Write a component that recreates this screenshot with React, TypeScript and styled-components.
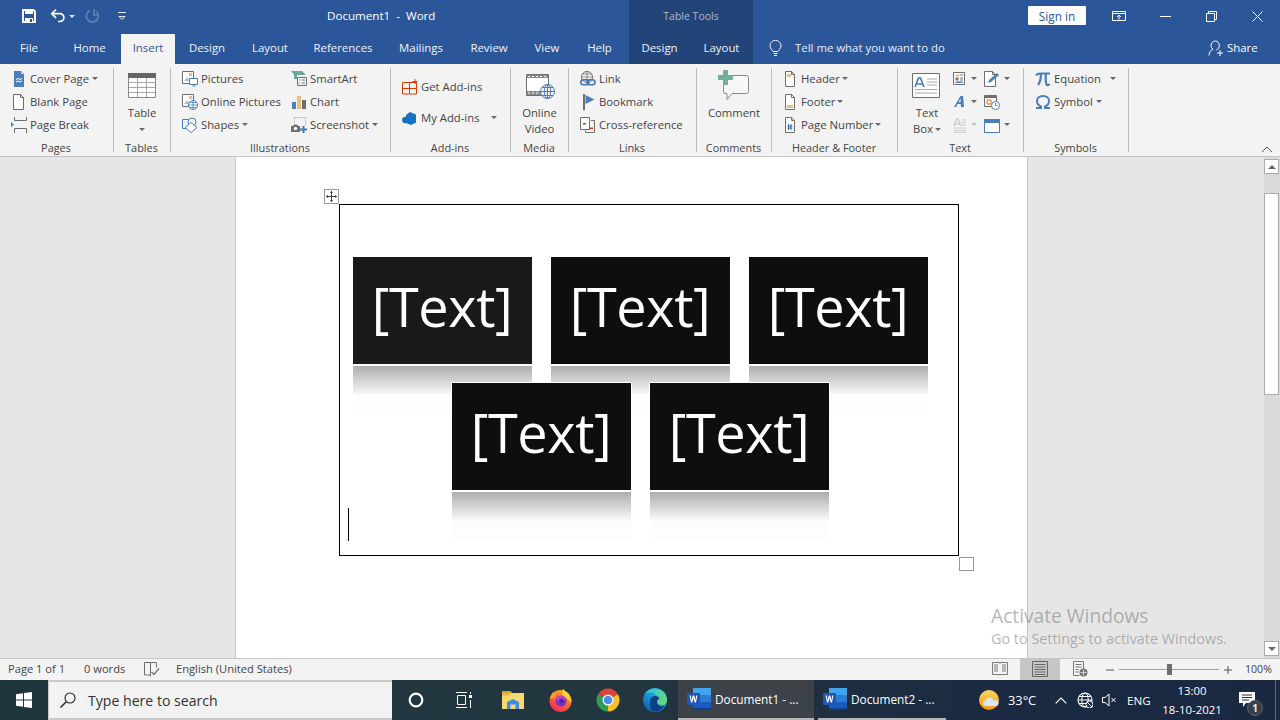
import React from "react";
import styled, { createGlobalStyle } from "styled-components";

const UI = `"Open Sans", "Noto Sans", "Liberation Sans", sans-serif`;

const Global = createGlobalStyle`
  html, body { margin: 0; padding: 0; width: 1280px; height: 720px; overflow: hidden; background: #fff; }
  #root { width: 1280px; height: 720px; }
  * { box-sizing: border-box; }
  svg { display: block; flex: none; }
`;

const Shell = styled.div`
  width: 1280px; height: 720px; display: flex; flex-direction: column;
  font-family: ${UI}; font-size: 11.3px; color: #444; position: relative; overflow: hidden;
`;

/* ---------- title bar ---------- */
const TitleBar = styled.header`
  height: 32px; background: #2b579a; display: grid; grid-template-columns: 629px 124px 1fr; color: #fff;
`;
const TitleLeft = styled.div`display: flex; align-items: center; padding-left: 21px;`;
const Qat = styled.div<{ $ml: number }>`margin-left: ${p => p.$ml}px; display: flex; align-items: center;`;
const DocTitle = styled.div`margin-left: 200px; margin-bottom: 2px; font-size: 11.6px; white-space: pre; color: #fff;`;
const CtxTitle = styled.div`
  background: #234479; color: #a8b9d4; font-size: 10.5px; display: flex; align-items: center; justify-content: center; padding-bottom: 1px;
`;
const TitleRight = styled.div`display: flex; align-items: center; padding-left: 275px;`;
const SignIn = styled.button`
  width: 58px; height: 19px; border: 0; border-radius: 1px; background: #fff; color: #2b579a; padding: 0;
  font: 11.8px ${UI}; margin-bottom: 1px;
`;
const WinBtn = styled.div<{ $ml: number }>`margin-left: ${p => p.$ml}px;`;

/* ---------- tabs ---------- */
const TabBar = styled.nav`
  height: 32px; background: #2b579a; display: grid; grid-template-columns: 629px 124px 1fr;
`;
const TabGroup = styled.div`display: flex;`;
const CtxTabs = styled.div`display: flex; background: #234479;`;
const Tab = styled.div<{ $w: number; $on?: boolean }>`
  width: ${p => p.$w}px; display: flex; align-items: center; justify-content: center;
  font-size: 11.4px; margin-top: 2px; padding-bottom: 3px;
  color: ${p => (p.$on ? "#2b579a" : "#f0f3f8")};
  background: ${p => (p.$on ? "#f3f3f3" : "transparent")};
`;
const TellRow = styled.div`display: flex; align-items: center; padding-left: 16px; color: #e8edf5; font-size: 11.4px;`;
const TellText = styled.span`margin-left: 13px; width: 413px; white-space: nowrap; margin-bottom: 1px;`;
const ShareText = styled.span`margin-left: 3px; color: #fff; margin-bottom: 1px;`;

/* ---------- ribbon ---------- */
const Ribbon = styled.section`
  height: 93px; background: #f3f3f3; border-bottom: 1px solid #c6c6c6; padding-top: 3px; display: flex; position: relative;
`;
const Group = styled.div<{ $w: number }>`
  width: ${p => p.$w}px; height: 89px; display: flex; flex-direction: column; position: relative;
  &::after { content: ""; position: absolute; right: 0; top: 1px; bottom: 4px; width: 1px; background: #bcbcbc; }
`;
const GroupBody = styled.div<{ $pl?: number; $dir?: string }>`
  height: 73px; display: flex; flex-direction: ${p => p.$dir || "row"}; padding-left: ${p => p.$pl ?? 0}px;
`;
const GroupLabel = styled.div`
  height: 16px; line-height: 16px; text-align: center; font-size: 10.9px; color: #444; padding-right: 2px; white-space: nowrap;
`;
const Col = styled.div<{ $w?: number }>`
  display: flex; flex-direction: column; ${p => (p.$w ? `width: ${p.$w}px;` : "")}
`;
const Small = styled.div<{ $h?: number }>`
  height: ${p => p.$h ?? 23}px; display: flex; align-items: center; gap: 3px; white-space: nowrap;
`;
const Caret = styled.i<{ $ml?: number; $off?: boolean }>`
  display: inline-block; width: 0; height: 0; flex: none; margin-left: ${p => p.$ml ?? 0}px;
  border-left: 3px solid transparent; border-right: 3px solid transparent;
  border-top: 3px solid ${p => (p.$off ? "#c4c4c4" : "#666")};
`;
const Large = styled.div<{ $w: number; $ml?: number }>`
  width: ${p => p.$w}px; margin-left: ${p => p.$ml ?? 0}px; padding-top: 3px;
  display: flex; flex-direction: column; align-items: center; line-height: 16px; text-align: center;
`;
const LargeLine = styled.div`display: flex; align-items: center; height: 16px; white-space: nowrap;`;
const AddinRow = styled(Small)<{ $mt: number }>`height: 23px; margin-top: ${p => p.$mt}px;`;
const Collapse = styled.div`position: absolute; right: 7px; bottom: 3px;`;

/* ---------- document ---------- */
const DocArea = styled.main`
  flex: 1; min-height: 0; display: flex; background: #e6e6e6; position: relative;
`;
const Gutter = styled.div<{ $w: number }>`width: ${p => p.$w}px; flex: none;`;
const Page = styled.div`
  width: 793px; flex: none; background: #fff; border-left: 1px solid #c6c6c6; border-right: 1px solid #c6c6c6;
  padding: 47px 0 0 103px;
`;
const Frame = styled.div`
  width: 620px; height: 352px; border: 1px solid #000; padding: 52px 0 0 13px; position: relative;
`;
const MoveHandle = styled.div`
  position: absolute; left: -16px; top: -16px; width: 15px; height: 15px; border: 1px solid #999; background: #fff;
  display: flex; align-items: center; justify-content: center;
`;
const SizeHandle = styled.div`
  position: absolute; right: -16px; bottom: -16px; width: 15px; height: 14px; border: 1px solid #999; background: #fff;
`;
const TextCaret = styled.div`position: absolute; left: 8px; top: 303px; width: 1px; height: 33px; background: #000;`;
const CardRow = styled.div<{ $top?: boolean }>`
  width: 575px; height: 126px; display: flex; justify-content: center; gap: 19px; position: relative;
  z-index: ${p => (p.$top ? 2 : 1)};
`;
const Card = styled.div<{ $bg?: string; $ring?: boolean }>`
  width: 179px; height: 107px; background: ${p => p.$bg || "#0e0e0e"}; color: #fff; position: relative;
  display: flex; align-items: center; justify-content: center; font-size: 54px; letter-spacing: -0.4px;
  padding: 0 1px 10px 0;
  ${p => (p.$ring ? "box-shadow: 0 0 0 1px #fff;" : "")}
`;
const Reflection = styled.div`
  position: absolute; left: 0; right: 0; top: 109px; height: 48px;
  background: linear-gradient(#adadad 0, #f8f8f8 28px, #fdfdfd 30px, #fdfdfd 100%);
`;
const Scrollbar = styled.aside`
  width: 16px; flex: none; margin-left: auto; background: #dadada; padding: 2px 0 2px 0;
  display: flex; flex-direction: column;
`;
const ScrollBtn = styled.div<{ $down?: boolean }>`
  width: 15px; height: 15px; background: #fff; border: 1px solid #ababab; display: flex; align-items: center; justify-content: center;
  ${p => (p.$down ? "margin-top: auto;" : "")}
`;
const ScrollThumb = styled.div`
  width: 15px; height: 202px; margin-top: 19px; background: #fff; border: 1px solid #ababab;
`;
const ArrowUp = styled.i`
  width: 0; height: 0; border-left: 4px solid transparent; border-right: 4px solid transparent; border-bottom: 4px solid #666;
`;
const ArrowDown = styled.i`
  width: 0; height: 0; border-left: 4px solid transparent; border-right: 4px solid transparent; border-top: 4px solid #666;
`;
const Watermark = styled.div`
  position: absolute; left: 991px; top: 447px; color: rgba(120, 120, 120, 0.55); white-space: nowrap; z-index: 5;
`;
const WmBig = styled.div`font-size: 19.2px; line-height: 24px;`;
const WmSmall = styled.div`font-size: 14.4px; line-height: 20px; margin-top: 1px;`;

/* ---------- status bar ---------- */
const StatusBar = styled.footer`
  height: 22px; flex: none; background: #f3f3f3; border-top: 1px solid #c6c6c6; display: flex; align-items: center;
  font-size: 11.15px; color: #444; padding-left: 8px;
`;
const StatusItem = styled.div<{ $w: number }>`width: ${p => p.$w}px; white-space: nowrap; flex: none; padding-bottom: 2px;`;
const StatusRight = styled.div`margin-left: auto; display: flex; align-items: center; height: 100%; padding-right: 8px;`;
const ViewBtn = styled.div<{ $on?: boolean; $ml: number }>`
  margin-left: ${p => p.$ml}px; width: ${p => (p.$on ? 40 : 16)}px; height: 100%; display: flex; align-items: center; justify-content: center;
  padding-bottom: 1px;
  background: ${p => (p.$on ? "#c6c6c6" : "transparent")};
`;
const ZoomIcon = styled.div<{ $ml: number }>`margin-left: ${p => p.$ml}px;`;
const ZoomSlider = styled.div`margin-left: 5px; width: 100px; height: 1px; background: #a0a0a0; position: relative;`;
const ZoomThumb = styled.div`position: absolute; left: 48px; top: -5px; width: 5px; height: 11px; background: #6e6e6e;`;
const ZoomValue = styled.div`margin-left: 13px; width: 27px; white-space: nowrap; font-size: 10.6px; padding-bottom: 2px;`;

/* ---------- taskbar ---------- */
const Taskbar = styled.div`
  height: 40px; flex: none; display: flex; align-items: center; color: #fff;
  background: linear-gradient(90deg, #20363f 0, #22363f 620px, #1f3040 800px, #1b2a42 1000px, #1a2842 100%);
`;
const StartBtn = styled.div`width: 48px; height: 100%; flex: none; display: flex; align-items: center; justify-content: center;`;
const SearchBox = styled.div`
  width: 344px; height: 100%; flex: none; background: #f2f2f2; border: 1px solid #c9c9c9; border-width: 2px 0 2px 1px;
  display: flex; align-items: center; gap: 12px; padding-left: 11px; color: #333; font-size: 14.1px;
`;
const TaskSlot = styled.div<{ $w: number }>`
  width: ${p => p.$w}px; height: 100%; flex: none; display: flex; align-items: center; justify-content: center;
`;
const AppBtn = styled.div<{ $on?: boolean; $w: number; $ml?: number; $pl: number }>`
  width: ${p => p.$w}px; margin-left: ${p => p.$ml ?? 0}px; padding-left: ${p => p.$pl}px; height: 100%; flex: none;
  display: flex; align-items: center; gap: 4px; font-size: 11.8px; white-space: nowrap; color: #fff;
  background: ${p => (p.$on ? "#3c4248" : "transparent")}; border-bottom: 2px solid #b7b7b7;
`;
const Tray = styled.div<{ $ml: number; $w?: number; $fs?: number }>`
  margin-left: ${p => p.$ml}px; ${p => (p.$w ? `width: ${p.$w}px;` : "")} flex: none; display: flex; align-items: center;
  font-size: ${p => p.$fs ?? 12}px; white-space: nowrap; position: relative;
`;
const Clock = styled.div`
  width: 80px; flex: none; margin-left: 2px; text-align: center; font-size: 11.4px; line-height: 19px; color: #fff;
`;
const Badge = styled.div`
  position: absolute; left: 8px; top: 8px; width: 16px; height: 16px; border-radius: 50%; background: #3a3f46;
  border: 1px solid #5c6068; display: flex; align-items: center; justify-content: center; font-size: 10px; font-weight: 700; color: #eee;
`;
const DesktopEdge = styled.div`margin-left: auto; margin-right: 4px; width: 1px; height: 100%; background: #5c6878;`;

/* ---------- icons ---------- */
const BLUE = "#4a7ebb";
const GRAY = "#6e6e6e";
const TAN = "#e8c07d";

const I = ({ w = 16, h = 16, children }: { w?: number; h?: number; children: React.ReactNode }) => (
  <svg width={w} height={h} viewBox={`0 0 ${w} ${h}`} fill="none" strokeWidth={1}>{children}</svg>
);

const SaveIcon = () => (
  <I><path d="M2 2h10.500l1.500 1.500V14H2z" stroke="#fff" strokeWidth="2" /><path d="M4 1h8v5H4zM4 10h8v5H4z" fill="#fff" /><path d="M9 11h2v3H9z" fill="#2b579a" /></I>
);
const UndoIcon = () => (
  <I><path d="M6 1.500L1.800 5.700 6 9.800M2 5.700h8a3.900 3.900 0 0 1 0 7.800H8" stroke="#fff" strokeWidth="1.700" /></I>
);
const RedoIcon = () => (
  <I><path d="M5 2.500a6 6 0 1 0 6.500 1.200" stroke="#5d80b5" strokeWidth="1.700" /><path d="M9 1v6h5" stroke="#5d80b5" strokeWidth="1.700" /></I>
);
const CustomIcon = () => (
  <I w={10} h={10}><path d="M1 1.500h8" stroke="#e4eaf3" /><path d="M2 5.500h6l-3 3z" stroke="#e4eaf3" /></I>
);
const DisplayIcon = () => (
  <I w={14} h={12}><path d="M.5 1.500h13v9H.5z" stroke="#fff" /><path d="M1 3.500h12" stroke="#fff" /><path d="M7 9.500V5.500M5 7l2-2 2 2" stroke="#fff" /></I>
);
const MinIcon = () => <I w={11} h={11}><path d="M0 5.500h11" stroke="#fff" /></I>;
const RestoreIcon = () => (
  <I w={11} h={11}><path d="M.5 2.500h8v8h-8z" stroke="#fff" /><path d="M2.500 2.500v-2h8v8h-2" stroke="#fff" /></I>
);
const CloseIcon = () => <I w={11} h={11}><path d="M.5.500l10 10M10.500.500l-10 10" stroke="#fff" /></I>;
const BulbIcon = () => (
  <I w={13} h={17}><path d="M4 11.500C3 9.500 1 8.500 1 5.800a5.400 5.400 0 0 1 11 0c0 2.700-2 3.700-3 5.700z" stroke="#eef2f8" /><path d="M4.500 13.500h4M5 15.500h3" stroke="#eef2f8" /></I>
);
const ShareIcon = () => (
  <I><path d="M1 15.500c0-3.500 2-5.500 4-6-1.500-1-2-2.400-2-3.800C3 3 5 1 7.300 1s4 2 4 4.700c0 1.700-1 3.600-3 4.300" stroke="#fff" /><path d="M9 13h6M12 10v6" stroke="#fff" /></I>
);

const CoverIcon = () => (
  <I><path d="M3 0h7l3 3v13H3z" fill={BLUE} /><path d="M10 0l3 3h-3z" fill="#bcd0e8" /><path d="M5 8.500l2-1 2 1 2-1M5 11l2-1 2 1 2-1" stroke="#fff" /></I>
);
const BlankIcon = () => (
  <I><path d="M2.500.500h7l3 3v12h-10z" fill="#fff" stroke={GRAY} /><path d="M9.500.500v3h3" stroke={GRAY} /></I>
);
const BreakIcon = () => (
  <I><path d="M3.500 0v3.500h12V0M3.500 16v-4.500h12V16" stroke={GRAY} /><path d="M0 5l3 2.500L0 10z" fill={BLUE} /></I>
);
const PicturesIcon = () => (
  <I><path d="M.5.500h11v12H.5z" fill="#fff" stroke={GRAY} /><path d="M7 2h3v3H7z" fill={TAN} /><path d="M2 10l3-4 3 4z" fill="#a9bfdc" /><path d="M7.500 7.500h8v6h-8z" fill="#fff" stroke={BLUE} /><path d="M10.500 14.500h3v1h-3z" fill={BLUE} /></I>
);
const OnlinePicIcon = () => (
  <I><path d="M.5.500h11v12H.5z" fill="#fff" stroke={GRAY} /><path d="M7 2h3v3H7z" fill={TAN} /><path d="M2 10l3-4 3 4z" fill="#a9bfdc" /><circle cx="11" cy="11" r="4.500" fill="#fff" stroke={BLUE} /><path d="M6.500 11h9M11 6.500v9M7.500 8.500h7M7.500 13.500h7" stroke={BLUE} strokeWidth=".8" /></I>
);
const ShapesIcon = () => (
  <I><path d="M.5 2.500h9v9h-9z" stroke={BLUE} /><circle cx="10" cy="5" r="4" stroke={BLUE} fill="#f3f3f3" /><path d="M9 5.500l6 5-6 5-6-5z" fill="#fff" stroke={BLUE} /></I>
);
const SmartArtIcon = () => (
  <I><path d="M0 0h11l4 4H6v4H3V3.500z" fill="#6aa99a" /><path d="M6.500 6.500h9v8h-9z" fill="#f7f7f7" stroke={GRAY} /><path d="M8 9h1M8 12h1M10.500 9h3.500M10.500 12h3.500" stroke={GRAY} /></I>
);
const ChartIcon = () => (
  <I><path d="M1 8h4v7H1z" fill={BLUE} /><path d="M6 2h4v13H6z" fill={TAN} /><path d="M11 6h4v9h-4z" fill={GRAY} /></I>
);
const ScreenshotIcon = () => (
  <I><path d="M3.500.500h11v8" stroke="#9a9a9a" strokeDasharray="1 1" /><path d="M3.500.500v5" stroke="#9a9a9a" strokeDasharray="1 1" /><path d="M0 9h2l1-1.500h3l1 1.500h2v6H0z" fill={GRAY} /><circle cx="4.500" cy="11.500" r="1.800" fill="#f3f3f3" /><path d="M12.500 9v7M9 12.500h7" stroke="#3f79b8" strokeWidth="2" /></I>
);
const AddinIcon = () => (
  <I><path d="M.5 3.500h14v11.500H.5zM.5 9.500h14M7.500 3.500v11.500" stroke="#d83b01" /><path d="M10.500 2.500h5M13 0v5" stroke="#d83b01" /></I>
);
const MyAddinIcon = () => (
  <I><circle cx="3.500" cy="10" r="3.300" fill="#0f6cbd" /><path d="M8 2l6 2.500v8L9 15l-5-2V5z" fill="#1273c4" /></I>
);
const VideoIcon = () => (
  <I w={36} h={35}>
    <path d="M4.500 4.500h22v21h-22z" fill="#fff" stroke={GRAY} />
    <path d="M5 5h21v3H5zM5 21h21v4H5z" fill="#8a8a8a" />
    <path d="M6 6h2v1H6zM10 6h2v1h-2zM14 6h2v1h-2zM18 6h2v1h-2zM22 6h2v1h-2zM6 22.500h2v1H6zM10 22.500h2v1h-2zM14 22.500h2v1h-2z" fill="#fff" />
    <circle cx="25.500" cy="21.500" r="7" fill="#f3f3f3" stroke={BLUE} />
    <path d="M18.500 21.500h14M25.500 14.500v14M20 17.500h11M20 25.500h11" stroke={BLUE} />
    <ellipse cx="25.500" cy="21.500" rx="3.200" ry="7" stroke={BLUE} />
  </I>
);
const LinkIcon = () => (
  <I><circle cx="7" cy="6" r="5.500" stroke={GRAY} fill="#f3f3f3" /><path d="M1.500 6h11M7 .5v11M2.500 3h9M2.500 9h9" stroke={GRAY} strokeWidth=".7" /><rect x=".8" y="8.800" width="8" height="5" rx="2.500" stroke="#3f79b8" strokeWidth="1.600" /><rect x="7" y="8.800" width="8" height="5" rx="2.500" stroke="#3f79b8" strokeWidth="1.600" /></I>
);
const BookmarkIcon = () => (
  <I><path d="M3 0h2v16H3z" fill={GRAY} /><path d="M5.500 1v9l9-4.500z" fill={BLUE} /></I>
);
const CrossRefIcon = () => (
  <I><path d="M.5.500h9v12h-9z" fill="#fff" stroke={GRAY} /><path d="M11 3.500h3.500v12h-9v-2" stroke={GRAY} /><path d="M3 6h3v1.500H3z" fill="#d83b01" /><path d="M10 10.500h3V12h-3z" fill="#d83b01" /></I>
);
const CommentIcon = () => (
  <I w={36} h={35}>
    <path d="M7.500 5.500h23q2 0 2 2v14q0 2-2 2H16l-5 6v-6H9q-1.500 0-1.500-2z" fill="#f7f7f7" stroke="#8a8a8a" />
    <path d="M7 0h5v5h5v5h-5v5H7v-5H2V5h5z" fill="#6fb09d" />
  </I>
);
const HeaderIcon = () => (
  <I><path d="M3.500.500h6l3 3v12h-9z" fill="#fff" stroke={GRAY} /><path d="M9.500.500v3h3" stroke={GRAY} /><path d="M5 3h4v3H5z" fill={TAN} /></I>
);
const FooterIcon = () => (
  <I><path d="M3.500.500h6l3 3v12h-9z" fill="#fff" stroke={GRAY} /><path d="M9.500.500v3h3" stroke={GRAY} /><path d="M5 11h6v3H5z" fill={TAN} /></I>
);
const PageNumIcon = () => (
  <I><path d="M3.500.500h6l3 3v12h-9z" fill="#fff" stroke={GRAY} /><path d="M9.500.500v3h3" stroke={GRAY} /><path d="M6.500 7v6M9 7v6M5.500 9h5M5.500 11h5" stroke="#2f6db5" /></I>
);
const TextBoxIcon = () => (
  <I w={36} h={35}>
    <path d="M3.500 3.500h27v24h-27z" fill="#fff" stroke={GRAY} />
    <path d="M6 17l3.500-9h2L15 17M7.500 14h6" stroke={BLUE} strokeWidth="1.700" />
    <path d="M18 9h10M18 12h10M18 15h10M6 19.500h22M6 23h22" stroke="#a8a8a8" />
  </I>
);
const QuickPartsIcon = () => (
  <I w={14} h={16}><path d="M.5 1.500h11v12H.5z" fill="#fff" stroke={GRAY} /><path d="M2.500 3.500h4v2h-4z" fill={TAN} /><path d="M2.500 6.500h3v3h-3z" fill="#777" /><path d="M7 4h3M7 7h3M7 9h3" stroke="#777" /><path d="M2.500 10.500h7v1.500h-7z" fill={BLUE} /></I>
);
const WordArtIcon = () => (
  <I w={14} h={16}><path d="M1 13l6.500-11h2.500l1 11H8l-.2-3H4.500l-1.500 3zM5.500 8h2.200L7.500 4.500z" fill={BLUE} /></I>
);
const DropCapIcon = () => (
  <I w={14} h={16}><path d="M1 9l2.500-7H5l2.500 7M2 7h4.500" stroke="#c6c6c6" strokeWidth="1.200" /><path d="M8 3h5M8 5.500h5M8 8h5M1 11h12M1 13.500h12M1 15.500h12" stroke="#cfcfcf" /></I>
);
const SignLineIcon = () => (
  <I><path d="M.5.500h8l3 3v12h-11z" fill="#fff" stroke={GRAY} /><path d="M8.500.500v3h3" stroke={GRAY} /><path d="M4 12l1-3 8-7 2 2-8 7z" fill={BLUE} /></I>
);
const DateIcon = () => (
  <I><path d="M.5 1.500h12v11H.5z" fill="#fff" stroke={GRAY} /><path d="M1 1h11v3H1z" fill={GRAY} /><path d="M3 6h4v4H3z" fill="#fff" stroke="#d86a1a" /><circle cx="11.500" cy="11.500" r="4" fill="#fff" stroke={BLUE} /><path d="M11.500 9v2.500h2" stroke={BLUE} /></I>
);
const ObjectIcon = () => (
  <I><path d="M.5 2.500h15v13H.5z" fill="#fff" stroke={BLUE} /><path d="M0 2h16v4H0z" fill={BLUE} /></I>
);
const PiIcon = () => (
  <I><path d="M1 4.500C2 3 3 2.500 5 2.500h10M6 2.500c0 5-1 9-3 11.500M11 2.500c-.5 4-.5 8 .5 11 .5 1 2 1 3-.5" stroke={BLUE} strokeWidth="2.200" /></I>
);
const OmegaIcon = () => (
  <I><path d="M1 14h5v-1.500C3.500 11.500 2 9.500 2 7c0-3 2.500-5 6-5s6 2 6 5c0 2.500-1.500 4.500-4 5.500V14h5" stroke={BLUE} strokeWidth="2" /></I>
);
const ChevUp = () => <I w={12} h={7}><path d="M1 6l5-5 5 5" stroke="#555" /></I>;
const MoveIcon = () => (
  <I w={11} h={11}><path d="M5.500 0v11M0 5.500h11" stroke="#444" /><path d="M4 2h3L5.500 0zM4 9h3l-1.500 2zM2 4v3L0 5.500zM9 4v3l2-1.500z" fill="#444" /></I>
);
const ProofIcon = () => (
  <I><path d="M.5 1.500h6v12.500h-6zM6.500 1.500h6" stroke={GRAY} /><path d="M12.500 1.500v5" stroke={GRAY} /><path d="M7.500 11l2.500 2.500 5-6" stroke={GRAY} strokeWidth="1.200" /><path d="M6.500 14v1.500" stroke={GRAY} /></I>
);
const ReadIcon = () => (
  <I><path d="M.5 1.500h7l.5 1 .5-1h7v12h-7l-.5 1-.5-1h-7z" stroke="#777" /><path d="M2 4h4M2 6h4M2 8h4M2 10h4M10 4h4M10 6h4M10 8h4M10 10h4" stroke="#777" /></I>
);
const PrintIcon = () => (
  <I w={18} h={16}><path d="M1.500.500h15v15h-15z" stroke="#666" /><path d="M3.500 3.500h11M3.500 6h11M3.500 8.500h11M3.500 11h11M3.500 13.500h11" stroke="#666" /></I>
);
const WebIcon = () => (
  <I><path d="M1.500.500h10v11" stroke="#777" /><path d="M1.500.500v14h6" stroke="#777" /><path d="M3.500 3.500h6M3.500 6h6M3.500 8.500h3M3.500 11h3" stroke="#777" /><circle cx="11.500" cy="11.500" r="4" fill="#777" /><path d="M8.500 11.500h6M11.500 8.500v6" stroke="#f3f3f3" strokeWidth=".7" /></I>
);
const MinusIcon = () => <I w={8} h={8}><path d="M0 4h8" stroke="#555" /></I>;
const PlusIcon = () => <I w={8} h={8}><path d="M0 4h8M4 0v8" stroke="#555" /></I>;

const WinLogo = () => (
  <I><path d="M0 2.300l7-1v6.200H0zM8 1.100L16 0v7.500H8zM0 8.500h7v6.200l-7-1zM8 8.500h8V16l-8-1.100z" fill="#fff" /></I>
);
const SearchIcon = () => (
  <I><circle cx="10" cy="6" r="5" stroke="#222" strokeWidth="1.100" /><path d="M6.500 9.500L.5 15.500" stroke="#222" strokeWidth="1.400" /></I>
);
const CortanaIcon = () => (
  <I><circle cx="8" cy="8" r="6.300" stroke="#fff" strokeWidth="2.200" /></I>
);
const TaskViewIcon = () => (
  <I><path d="M0 .5h11M0 15.500h11" stroke="#fff" /><path d="M1.500 3.500h8v9h-8z" stroke="#fff" /><path d="M13 3h3v3h-3z" fill="#fff" /><path d="M14.500 0v2M14.500 8v8" stroke="#fff" /></I>
);
const ExplorerIcon = () => (
  <I w={22} h={20}>
    <path d="M0 1h8l2 2h12v16H0z" fill="#f9d86f" />
    <path d="M0 1h8l2 2H0z" fill="#d9a21e" />
    <path d="M0 3h9l-2 2.500H0z" fill="#e8b93a" />
    <path d="M5 12l6-3 6 3v7h-3.500v-4.500h-5V19H5z" fill="#3d8ee0" />
  </I>
);
const FirefoxIcon = () => (
  <I w={24} h={24}>
    <defs>
      <linearGradient id="ffa" x1="0.8" y1="0" x2="0.2" y2="1"><stop offset="0" stopColor="#ffc21a" /><stop offset=".45" stopColor="#ff6a2c" /><stop offset="1" stopColor="#f0255c" /></linearGradient>
    </defs>
    <circle cx="11.500" cy="13" r="11" fill="url(#ffa)" />
    <path d="M14 .5c1 2.500 4 3.500 6 6.500 1.500 2.500 2.500 5 2.500 7L17 10c-1.500-1-3.500-2-4-4z" fill="#ffd53d" />
    <path d="M4 4c-1 2-3 4-3 7l5-1 1-4z" fill="#ff9a2a" />
    <circle cx="12" cy="13" r="5.500" fill="#7a35c8" />
    <path d="M7.500 10c2-3 7-3 9 0 .5 2-1 3-3 2.500-2-.5-3 .5-3 2-1.500-1-3-2.500-3-4.500z" fill="#c13fd6" />
    <circle cx="12.500" cy="13" r="2.500" fill="#4b2aa8" />
  </I>
);
const ChromeIcon = () => (
  <I w={24} h={24}>
    <path d="M2.040 6.250A11.500 11.500 0 0 1 21.960 6.250L12 12z" fill="#db4437" />
    <path d="M2.040 6.250A11.500 11.500 0 0 0 12 23.500L12 12z" fill="#2f9e4f" />
    <path d="M21.960 6.250A11.500 11.500 0 0 1 12 23.500L12 12z" fill="#f6c02c" />
    <circle cx="12" cy="12" r="5.500" fill="#fff" />
    <circle cx="12" cy="12" r="4.300" fill="#4a8df0" />
  </I>
);
const EdgeIcon = () => (
  <I w={24} h={24}>
    <defs>
      <linearGradient id="edg" x1="0" y1="1" x2="1" y2="0"><stop offset="0" stopColor="#0c59a4" /><stop offset=".55" stopColor="#1b9de2" /><stop offset="1" stopColor="#35c1f1" /></linearGradient>
      <linearGradient id="edg2" x1="0" y1="0" x2="1" y2="1"><stop offset="0" stopColor="#30c9d8" /><stop offset="1" stopColor="#6fd86c" /></linearGradient>
    </defs>
    <circle cx="12" cy="12" r="12" fill="url(#edg)" />
    <path d="M10 1c7-1 14 4 14 11 0 3-2 5-5 5-2.500 0-5-1-5-3 0-1.500 1-2 1-4-1-5-7-8-13-4 2-3 5-5 8-5z" fill="url(#edg2)" />
    <path d="M7 13c0-3 2.500-5 5.500-5 2 0 3.500 1 4 2.500-1 .5-2.500 1-2.500 3.500 0 4 5 5.500 8 3-2 4-6 6.500-10 6.500C6 23.500 7 17 7 13z" fill="#0b3f86" />
  </I>
);
const WordIcon = () => (
  <I w={24} h={24}>
    <path d="M6 1h18v7H6z" fill="#41a5ee" />
    <path d="M6 8h18v7H6z" fill="#2b7cd3" />
    <path d="M6 15h18v8H6z" fill="#185abd" />
    <path d="M6 21h18v2H6z" fill="#103f91" />
    <path d="M0 6h13v12H0z" fill="#1f56b5" />
    <path d="M2.500 8.500l1.600 7h1.200L6.500 11l1.200 4.500h1.200l1.600-7H9.300l-.9 4.400-1.200-4.400H5.800l-1.200 4.400-.9-4.400z" fill="#fff" />
  </I>
);
const WeatherIcon = () => (
  <I w={20} h={20}>
    <defs>
      <linearGradient id="sun" x1="0" y1="0" x2="0" y2="1"><stop offset="0" stopColor="#fbd75b" /><stop offset="1" stopColor="#f39a16" /></linearGradient>
    </defs>
    <circle cx="10" cy="10" r="10" fill="url(#sun)" />
    <path d="M7 16c-2 0-3-1-3-2.300S5 11 6.500 11c.5-2 2-3.500 4-3.500 1.800 0 3.200 1.200 3.700 2.700 2.500-.4 5.300.8 5.300 3S18 16 16 16z" fill="#d6e6f5" />
  </I>
);
const ChevronTray = () => <I w={12} h={7}><path d="M.7 6.300L6 1l5.300 5.300" stroke="#fff" strokeWidth="1.200" /></I>;
const GlobeIcon = () => (
  <I>
    <circle cx="8" cy="8" r="7" stroke="#fff" strokeWidth="1.100" />
    <ellipse cx="8" cy="8" rx="3.200" ry="7" stroke="#fff" />
    <path d="M1 8h14M2 4.500h12M2 11.500h12" stroke="#fff" />
    <circle cx="12.500" cy="12.500" r="3.500" fill="#1b2a42" stroke="#fff" />
    <path d="M10.200 10.200l4.600 4.600" stroke="#fff" />
  </I>
);
const MuteIcon = () => (
  <I><path d="M1.500 5.500h2.500l4-3.500v12l-4-3.500H1.500z" stroke="#fff" /><path d="M10.500 6l4 4M14.500 6l-4 4" stroke="#fff" /></I>
);
const NotifIcon = () => (
  <I w={16} h={16}><path d="M0 0h16v11H7l-3 4v-4H0z" fill="#fff" /><path d="M3 3h10M3 5.500h10M3 8h7" stroke="#1b2a42" /></I>
);

/* ---------- data ---------- */
const tabs: [string, number, boolean?][] = [
  ["File", 58], ["Home", 63], ["Insert", 54, true], ["Design", 64], ["Layout", 62], ["References", 84],
  ["Mailings", 72], ["Review", 64], ["View", 52], ["Help", 53],
];

export default function App() {
  return (
    <Shell>
      <Global />
      <TitleBar>
        <TitleLeft>
          <SaveIcon />
          <Qat $ml={13}><UndoIcon /><Caret $ml={3} style={{ borderTopColor: "#e4eaf3" }} /></Qat>
          <Qat $ml={10}><RedoIcon /></Qat>
          <Qat $ml={16}><CustomIcon /></Qat>
          <DocTitle>Document1  -  Word</DocTitle>
        </TitleLeft>
        <CtxTitle>Table Tools</CtxTitle>
        <TitleRight>
          <SignIn>Sign in</SignIn>
          <WinBtn $ml={26}><DisplayIcon /></WinBtn>
          <WinBtn $ml={34}><MinIcon /></WinBtn>
          <WinBtn $ml={35}><RestoreIcon /></WinBtn>
          <WinBtn $ml={35}><CloseIcon /></WinBtn>
        </TitleRight>
      </TitleBar>

      <TabBar>
        <TabGroup>
          {tabs.map(([t, w, on]) => <Tab key={t} $w={w} $on={on}>{t}</Tab>)}
        </TabGroup>
        <CtxTabs>
          <Tab $w={61}>Design</Tab>
          <Tab $w={63}>Layout</Tab>
        </CtxTabs>
        <TellRow>
          <BulbIcon />
          <TellText>Tell me what you want to do</TellText>
          <ShareIcon />
          <ShareText>Share</ShareText>
        </TellRow>
      </TabBar>

      <Ribbon>
        <Group $w={114}>
          <GroupBody $pl={11}>
            <Col>
              <Small><CoverIcon />Cover Page<Caret /></Small>
              <Small><BlankIcon />Blank Page</Small>
              <Small><BreakIcon />Page Break</Small>
            </Col>
          </GroupBody>
          <GroupLabel>Pages</GroupLabel>
        </Group>
        <Group $w={57}>
          <GroupBody>
            <Large $w={56}>
              <I w={36} h={35}>
                <path d="M4.500 3.500h27v24h-27z" fill="#fff" stroke="#8a8a8a" />
                <path d="M4 3h28v5H4z" fill="#666" />
                <path d="M5 12.500h26M5 17.500h26M5 22.500h26M13.500 8v19M22.500 8v19" stroke="#a8a8a8" />
              </I>
              <LargeLine>Table</LargeLine>
              <LargeLine><Caret /></LargeLine>
            </Large>
          </GroupBody>
          <GroupLabel>Tables</GroupLabel>
        </Group>
        <Group $w={220}>
          <GroupBody $pl={11}>
            <Col $w={109}>
              <Small><PicturesIcon />Pictures</Small>
              <Small><OnlinePicIcon />Online Pictures</Small>
              <Small><ShapesIcon />Shapes<Caret /></Small>
            </Col>
            <Col>
              <Small><SmartArtIcon />SmartArt</Small>
              <Small><ChartIcon />Chart</Small>
              <Small><ScreenshotIcon />Screenshot<Caret /></Small>
            </Col>
          </GroupBody>
          <GroupLabel>Illustrations</GroupLabel>
        </Group>
        <Group $w={120}>
          <GroupBody $pl={11} $dir="column">
            <AddinRow $mt={8}><AddinIcon />Get Add-ins</AddinRow>
            <AddinRow $mt={8}><MyAddinIcon />My Add-ins<Caret $ml={8} /></AddinRow>
          </GroupBody>
          <GroupLabel>Add-ins</GroupLabel>
        </Group>
        <Group $w={58}>
          <GroupBody>
            <Large $w={57}>
              <VideoIcon />
              <LargeLine>Online</LargeLine>
              <LargeLine>Video</LargeLine>
            </Large>
          </GroupBody>
          <GroupLabel>Media</GroupLabel>
        </Group>
        <Group $w={128}>
          <GroupBody $pl={11}>
            <Col>
              <Small><LinkIcon />Link</Small>
              <Small><BookmarkIcon />Bookmark</Small>
              <Small><CrossRefIcon />Cross-reference</Small>
            </Col>
          </GroupBody>
          <GroupLabel>Links</GroupLabel>
        </Group>
        <Group $w={75}>
          <GroupBody>
            <Large $w={74}>
              <CommentIcon />
              <LargeLine>Comment</LargeLine>
            </Large>
          </GroupBody>
          <GroupLabel>Comments</GroupLabel>
        </Group>
        <Group $w={126}>
          <GroupBody $pl={10}>
            <Col>
              <Small><HeaderIcon />Header<Caret $ml={-1} /></Small>
              <Small><FooterIcon />Footer<Caret $ml={-1} /></Small>
              <Small><PageNumIcon />Page Number<Caret $ml={-1} /></Small>
            </Col>
          </GroupBody>
          <GroupLabel>Header &amp; Footer</GroupLabel>
        </Group>
        <Group $w={126}>
          <GroupBody>
            <Large $w={52} $ml={3}>
              <TextBoxIcon />
              <LargeLine>Text</LargeLine>
              <LargeLine>Box<Caret $ml={2} /></LargeLine>
            </Large>
            <Col $w={31}>
              <Small><QuickPartsIcon /><Caret $ml={1} /></Small>
              <Small><WordArtIcon /><Caret $ml={1} /></Small>
              <Small><DropCapIcon /><Caret $ml={1} $off /></Small>
            </Col>
            <Col>
              <Small><SignLineIcon /><Caret $ml={1} /></Small>
              <Small><DateIcon /></Small>
              <Small><ObjectIcon /><Caret $ml={1} /></Small>
            </Col>
          </GroupBody>
          <GroupLabel>Text</GroupLabel>
        </Group>
        <Group $w={105}>
          <GroupBody $pl={11}>
            <Col>
              <Small><PiIcon />Equation<Caret $ml={6} /></Small>
              <Small><OmegaIcon />Symbol<Caret /></Small>
            </Col>
          </GroupBody>
          <GroupLabel>Symbols</GroupLabel>
        </Group>
        <Collapse><ChevUp /></Collapse>
      </Ribbon>

      <DocArea>
        <Gutter $w={235} />
        <Page>
          <Frame>
            <MoveHandle><MoveIcon /></MoveHandle>
            <CardRow>
              <Card $bg="#191919">[Text]<Reflection /></Card>
              <Card>[Text]<Reflection /></Card>
              <Card>[Text]<Reflection /></Card>
            </CardRow>
            <CardRow $top>
              <Card $ring>[Text]<Reflection /></Card>
              <Card $ring>[Text]<Reflection /></Card>
            </CardRow>
            <TextCaret />
            <SizeHandle />
          </Frame>
        </Page>
        <Scrollbar>
          <ScrollBtn><ArrowUp /></ScrollBtn>
          <ScrollThumb />
          <ScrollBtn $down><ArrowDown /></ScrollBtn>
        </Scrollbar>
        <Watermark>
          <WmBig>Activate Windows</WmBig>
          <WmSmall>Go to Settings to activate Windows.</WmSmall>
        </Watermark>
      </DocArea>

      <StatusBar>
        <StatusItem $w={76}>Page 1 of 1</StatusItem>
        <StatusItem $w={60}>0 words</StatusItem>
        <StatusItem $w={32}><ProofIcon /></StatusItem>
        <StatusItem $w={130}>English (United States)</StatusItem>
        <StatusRight>
          <ViewBtn $ml={0}><ReadIcon /></ViewBtn>
          <ViewBtn $on $ml={12}><PrintIcon /></ViewBtn>
          <ViewBtn $ml={12}><WebIcon /></ViewBtn>
          <ZoomIcon $ml={18}><MinusIcon /></ZoomIcon>
          <ZoomSlider><ZoomThumb /></ZoomSlider>
          <ZoomIcon $ml={5}><PlusIcon /></ZoomIcon>
          <ZoomValue>100%</ZoomValue>
        </StatusRight>
      </StatusBar>

      <Taskbar>
        <StartBtn><WinLogo /></StartBtn>
        <SearchBox><SearchIcon />Type here to search</SearchBox>
        <TaskSlot $w={48}><CortanaIcon /></TaskSlot>
        <TaskSlot $w={48}><TaskViewIcon /></TaskSlot>
        <TaskSlot $w={49}><ExplorerIcon /></TaskSlot>
        <TaskSlot $w={48}><FirefoxIcon /></TaskSlot>
        <TaskSlot $w={46}><ChromeIcon /></TaskSlot>
        <TaskSlot $w={47}><EdgeIcon /></TaskSlot>
        <AppBtn $on $w={136} $pl={9}><WordIcon />Document1 - ...</AppBtn>
        <AppBtn $w={128} $ml={4} $pl={5}><WordIcon />Document2 - ...</AppBtn>
        <Tray $ml={33} $w={20}><WeatherIcon /></Tray>
        <Tray $ml={9} $w={30} $fs={12.8}>33°C</Tray>
        <Tray $ml={17} $w={12}><ChevronTray /></Tray>
        <Tray $ml={10} $w={16}><GlobeIcon /></Tray>
        <Tray $ml={8} $w={16}><MuteIcon /></Tray>
        <Tray $ml={10} $w={23} $fs={11.6}>ENG</Tray>
        <Clock>13:00<br />18-10-2021</Clock>
        <Tray $ml={7}><NotifIcon /><Badge>1</Badge></Tray>
        <DesktopEdge />
      </Taskbar>
    </Shell>
  );
}
